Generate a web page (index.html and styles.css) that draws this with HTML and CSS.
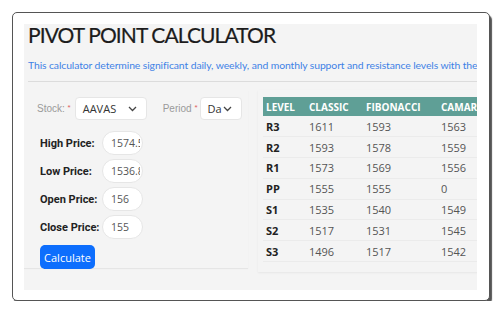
FILE: index.html
```html
<!DOCTYPE html>
<html lang="en">
<head>
    <meta charset="UTF-8">
    <meta name="viewport" content="width=device-width, initial-scale=1.0">
    <title>Pivot Point Calculator</title>
    <link rel="stylesheet" href="styles.css">
</head>
<body>

    <div class="frame">
        <div class="panel">
            <h1 class="title">PIVOT POINT CALCULATOR</h1>
            <p class="intro">This calculator determine significant daily, weekly, and monthly support and resistance levels with the help of pivot points.</p>
            <hr class="rule">

            <div class="content">
                <div class="form-card">
                    <div class="pickers">
                        <label class="pick-label">Stock: <span class="req">*</span></label>
                        <div class="select stock-select">
                            <span>AAVAS</span>
                            <svg width="9" height="6" viewBox="0 0 9 6"><path d="M1 1l3.5 3.5L8 1" fill="none" stroke="#444" stroke-width="1.3"/></svg>
                        </div>
                        <label class="pick-label period-label">Period <span class="req">*</span></label>
                        <div class="select period-select">
                            <span>Da</span>
                            <svg width="9" height="6" viewBox="0 0 9 6"><path d="M1 1l3.5 3.5L8 1" fill="none" stroke="#444" stroke-width="1.3"/></svg>
                        </div>
                    </div>

                    <div class="price-row">
                        <label class="price-label">High Price:</label>
                        <input class="price-input" type="text" value="1574.5">
                    </div>
                    <div class="price-row">
                        <label class="price-label">Low Price:</label>
                        <input class="price-input" type="text" value="1536.8">
                    </div>
                    <div class="price-row">
                        <label class="price-label">Open Price:</label>
                        <input class="price-input" type="text" value="156">
                    </div>
                    <div class="price-row">
                        <label class="price-label">Close Price:</label>
                        <input class="price-input" type="text" value="155">
                    </div>
                    <button class="calc-btn">Calculate</button>
                </div>

                <div class="table-card">
                    <table class="levels">
                        <colgroup>
                            <col class="c-level">
                            <col class="c-classic">
                            <col class="c-fib">
                            <col class="c-cam">
                            <col class="c-wood">
                        </colgroup>
                        <thead>
                            <tr><th>LEVEL</th><th>CLASSIC</th><th>FIBONACCI</th><th>CAMARILLA</th><th>WOODIE</th></tr>
                        </thead>
                        <tbody>
                            <tr><td>R3</td><td>1611</td><td>1593</td><td>1563</td><td>1609</td></tr>
                            <tr><td>R2</td><td>1593</td><td>1578</td><td>1559</td><td>1592</td></tr>
                            <tr><td>R1</td><td>1573</td><td>1569</td><td>1556</td><td>1571</td></tr>
                            <tr><td>PP</td><td>1555</td><td>1555</td><td>0</td><td>1554</td></tr>
                            <tr><td>S1</td><td>1535</td><td>1540</td><td>1549</td><td>1533</td></tr>
                            <tr><td>S2</td><td>1517</td><td>1531</td><td>1545</td><td>1516</td></tr>
                            <tr><td>S3</td><td>1496</td><td>1517</td><td>1542</td><td>1495</td></tr>
                        </tbody>
                    </table>
                </div>
            </div>
        </div>
    </div>

</body>
</html>
```

FILE: styles.css
```css
body, html {
    margin: 0;
    padding: 0;
    background-color: #fff;
    font-family: "Open Sans", Arial, sans-serif;
    overflow: hidden;
}
.frame {
    margin: 12px 0 0 12px;
    width: 453px;
    height: 266px;
    padding: 11px 12px 10px 11px;
    border: 1px solid #555;
    border-radius: 5px;
    box-shadow: 2px 3px 1px #555;
    background-color: #fff;
}
.panel {
    height: 100%;
    background-color: #f4f4f4;
    overflow: hidden;
    padding: 0 0 0 4px;
}
.title {
    margin: 0;
    font-family: Lato, "Open Sans", sans-serif;
    font-size: 21px;
    font-weight: 400;
    letter-spacing: -0.9px;
    line-height: 21px;
    color: #1c1c1c;
    white-space: nowrap;
    -webkit-text-stroke: 0.2px #1c1c1c;
}
.intro {
    margin: 13px 0 0 0;
    font-family: Lato, "Open Sans", sans-serif;
    font-size: 10.4px;
    letter-spacing: -0.1px;
    line-height: 14px;
    color: #3f82e6;
    white-space: nowrap;
}
.rule {
    margin: 9px 0 0 0;
    border: none;
    border-top: 1px solid #dcdcdc;
}
.content {
    display: flex;
    gap: 10px;
    margin-top: 8px;
    margin-left: -4px;
}
.form-card {
    flex: 0 0 224px;
    min-width: 0;
    padding: 7px 0 0 13px;
    box-sizing: border-box;
    height: 178px;
    box-shadow: 0 1px 1px rgba(0, 0, 0, 0.06);
}
.pickers {
    display: flex;
    align-items: center;
    height: 23px;
}
.pick-label {
    flex-shrink: 0;
    white-space: nowrap;
    font-family: "Liberation Sans", Arial, sans-serif;
    font-size: 10px;
    color: #9a9a9a;
    margin-right: 4px;
}
.period-label {
    margin-left: 16px;
    margin-right: 2px;
}
.req {
    color: #e06060;
    font-size: 8px;
    vertical-align: top;
}
.select {
    flex-shrink: 0;
    display: flex;
    align-items: center;
    justify-content: space-between;
    height: 23px;
    box-sizing: border-box;
    padding: 0 9px 0 7px;
    background-color: #fff;
    border: 1px solid #e6e6e6;
    border-radius: 4px;
    font-size: 11px;
    color: #333;
}
.stock-select {
    width: 72px;
}
.period-select {
    width: 42px;
    padding-left: 7px;
}
.price-row {
    display: flex;
    align-items: center;
    margin: 4px 0 0 3px;
    height: 24px;
}
.pickers + .price-row {
    margin-top: 11px;
}
.price-label {
    flex-shrink: 0;
    width: 62px;
    white-space: nowrap;
    font-family: Roboto, Arial, sans-serif;
    font-size: 11px;
    font-weight: 700;
    color: #222;
}
.price-input {
    flex-shrink: 0;
    width: 41px;
    height: 24px;
    box-sizing: border-box;
    padding: 0 2px 0 8px;
    border: 1px solid #e6e6e6;
    border-radius: 12px;
    background-color: #fff;
    font-family: "Open Sans", Arial, sans-serif;
    font-size: 10.5px;
    color: #555;
    outline: none;
}
.calc-btn {
    display: block;
    margin: 6px 0 0 3px;
    width: 55px;
    height: 24px;
    padding: 0;
    border: none;
    border-radius: 5px;
    background-color: #0d6efd;
    color: #fff;
    font-family: "Open Sans", Arial, sans-serif;
    font-size: 11px;
    cursor: pointer;
}
.table-card {
    flex: 0 0 auto;
    padding: 7px 0 10px 5px;
    box-shadow: 0 1px 2px rgba(0, 0, 0, 0.06);
}
.levels {
    border-collapse: collapse;
    table-layout: fixed;
    width: 320px;
    font-size: 11px;
}
.c-level { width: 43px; }
.c-classic { width: 57px; }
.c-fib { width: 75px; }
.c-cam { width: 75px; }
.c-wood { width: 70px; }
.levels th {
    height: 19px;
    padding: 0 0 0 3px;
    background-color: #5f9f96;
    color: #fff;
    font-size: 10px;
    font-weight: 700;
    text-align: left;
    white-space: nowrap;
}
.levels td {
    height: 20.8px;
    box-sizing: border-box;
    padding: 0 0 0 3px;
    border-bottom: 1px solid #ebebeb;
    color: #555;
}
.levels td:first-child {
    font-weight: 700;
    color: #222;
}
```
